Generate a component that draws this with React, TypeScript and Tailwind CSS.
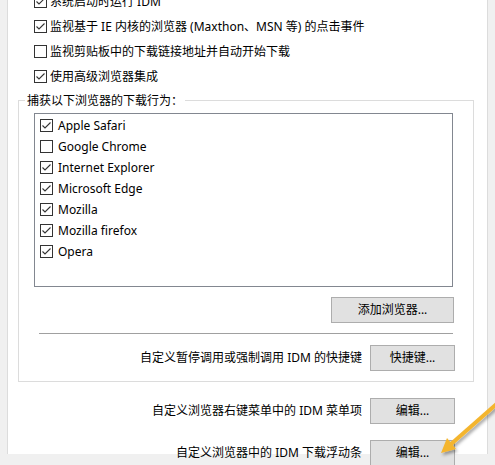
import React from 'react';

const font = "font-['Noto_Sans','Noto_Sans_CJK_SC',sans-serif]";

interface CheckProps {
  checked: boolean;
  label: string;
}

const CheckBox: React.FC<{ checked: boolean }> = ({ checked }) => (
  <svg width="13" height="13" viewBox="0 0 13 13" className="shrink-0">
    <rect x="0.5" y="0.5" width="12" height="12" fill="#fff" stroke="#333" />
    {checked && (
      <polyline points="2.5,6.5 5,9 10.5,3.5" fill="none" stroke="#333" strokeWidth="1.1" />
    )}
  </svg>
);

const TopOption: React.FC<CheckProps> = ({ checked, label }) => (
  <div className="flex items-center h-[25px] gap-[3px]">
    <CheckBox checked={checked} />
    <span className="whitespace-nowrap">{label}</span>
  </div>
);

const BrowserItem: React.FC<CheckProps> = ({ checked, label }) => (
  <div className="flex items-center h-[21px] gap-[5px]">
    <CheckBox checked={checked} />
    <span className="whitespace-nowrap">{label}</span>
  </div>
);

const WinButton: React.FC<{ label: string; width: string }> = ({ label, width }) => (
  <button
    type="button"
    className={`${width} h-[26px] shrink-0 bg-[#e1e1e1] border border-[#adadad] text-[12px] text-black flex items-center justify-center`}
  >
    {label}
  </button>
);

const topOptions: CheckProps[] = [
  { checked: true, label: '系统启动时运行 IDM' },
  { checked: true, label: '监视基于 IE 内核的浏览器 (Maxthon、MSN 等) 的点击事件' },
  { checked: false, label: '监视剪贴板中的下载链接地址并自动开始下载' },
  { checked: true, label: '使用高级浏览器集成' },
];

const browsers: CheckProps[] = [
  { checked: true, label: 'Apple Safari' },
  { checked: false, label: 'Google Chrome' },
  { checked: true, label: 'Internet Explorer' },
  { checked: true, label: 'Microsoft Edge' },
  { checked: true, label: 'Mozilla' },
  { checked: true, label: 'Mozilla firefox' },
  { checked: true, label: 'Opera' },
];

const App: React.FC = () => {
  return (
    <div className={`relative w-[495px] h-[465px] overflow-hidden bg-[#f0f0f0] text-[12px] text-black ${font}`}>
      <div className="ml-[7px] w-[481px] h-full bg-white border-x border-[#dcdcdc] px-[10px]">
        {/* top options, first one scrolled half out of view */}
        <div className="-mt-[11px] pl-[16px]">
          {topOptions.map((o) => (
            <TopOption key={o.label} {...o} />
          ))}
        </div>

        {/* group box */}
        <div className="relative mt-[11px] w-[456px] border border-[#dcdcdc] pt-[12px] pl-[15px] pb-[10px]">
          <span className="absolute -top-[8px] left-[6px] bg-white px-[2px] leading-[16px]">
            捕获以下浏览器的下载行为：
          </span>

          <div className="w-[419px] h-[174px] border border-[#828790] pl-[5px] pt-[1px]">
            {browsers.map((b) => (
              <BrowserItem key={b.label} {...b} />
            ))}
          </div>

          <div className="mt-[10px] w-[420px] flex justify-end">
            <WinButton label="添加浏览器..." width="w-[123px]" />
          </div>

          <div className="mt-[10px] ml-[5px] w-[414px] h-px bg-[#a0a0a0]" />

          <div className="mt-[11px] w-[421px] flex items-center justify-end gap-[8px]">
            <span className="whitespace-nowrap">自定义暂停调用或强制调用 IDM 的快捷键</span>
            <WinButton label="快捷键..." width="w-[85px]" />
          </div>
        </div>

        <div className="mt-[16px] w-[437px] flex items-center justify-end gap-[8px]">
          <span className="whitespace-nowrap">自定义浏览器右键菜单中的 IDM 菜单项</span>
          <WinButton label="编辑..." width="w-[85px]" />
        </div>

        <div className="mt-[16px] w-[437px] flex items-center justify-end gap-[8px]">
          <span className="whitespace-nowrap">自定义浏览器中的 IDM 下载浮动条</span>
          <WinButton label="编辑..." width="w-[85px]" />
        </div>
      </div>

      {/* annotation arrow */}
      <svg className="absolute inset-0 pointer-events-none" width="495" height="465" viewBox="0 0 495 465">
        <defs>
          <filter id="arrowShadow" x="-20%" y="-20%" width="140%" height="140%">
            <feDropShadow dx="1.5" dy="2.5" stdDeviation="1.8" floodColor="#000" floodOpacity="0.35" />
          </filter>
        </defs>
        <g filter="url(#arrowShadow)">
          <line x1="500" y1="401" x2="450" y2="445" stroke="#f4b52f" strokeWidth="4" />
          <polygon points="441,453 456,449 447,438" fill="#f4b52f" />
        </g>
      </svg>
    </div>
  );
};

export default App;
